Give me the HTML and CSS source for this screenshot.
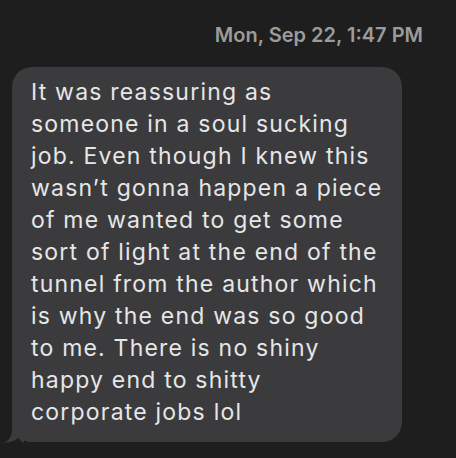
FILE: index.html
```html
<!DOCTYPE html>
<html>
<head>
<meta charset="utf-8">
<link rel="stylesheet" href="styles.css">
</head>
<body>
<div class="thread">
  <div class="stamp">Mon, Sep 22, 1:47 PM</div>
  <div class="row">
    <div class="bubble">
      <p class="text">It was reassuring as<br>someone in a soul sucking<br>job. Even though I knew this<br>wasn’t gonna happen a piece<br>of me wanted to get some<br>sort of light at the end of the<br>tunnel from the author which<br>is why the end was so good<br>to me. There is no shiny<br>happy end to shitty<br>corporate jobs lol</p>
      <svg class="tail" width="20" height="22" viewBox="0 0 20 22"><path d="M8 0 L8 8 C8 14 6 19 0 21.5 C6 21.8 11 20 14 17 C16 19 18 21 20 22 L20 0 Z" fill="#3b3b3d"/></svg>
    </div>
  </div>
</div>
</body>
</html>
```
FILE: styles.css
```css
html, body {
  margin: 0;
  padding: 0;
  background: #1e1e1e;
}
body {
  width: 456px;
  height: 458px;
  overflow: hidden;
  font-family: Inter, "Liberation Sans", sans-serif;
}
.thread {
  display: flex;
  flex-direction: column;
  padding-top: 22px;
}
.stamp {
  align-self: flex-end;
  margin-right: 33px;
  color: #9b9b9b;
  font-size: 20px;
  font-weight: 600;
  line-height: 26px;
}
.row {
  display: flex;
  padding-left: 12px;
  margin-top: 19px;
}
.bubble {
  position: relative;
  width: 352px;
  padding: 9px 19px 14px 19px;
  background: #3b3b3d;
  border-radius: 20px;
}
.text {
  margin: 0;
  color: #e6e6e6;
  font-size: 23px;
  line-height: 32px;
  letter-spacing: 1.2px;
  white-space: nowrap;
}
.tail {
  position: absolute;
  left: -8px;
  bottom: -1px;
  display: block;
}
```
